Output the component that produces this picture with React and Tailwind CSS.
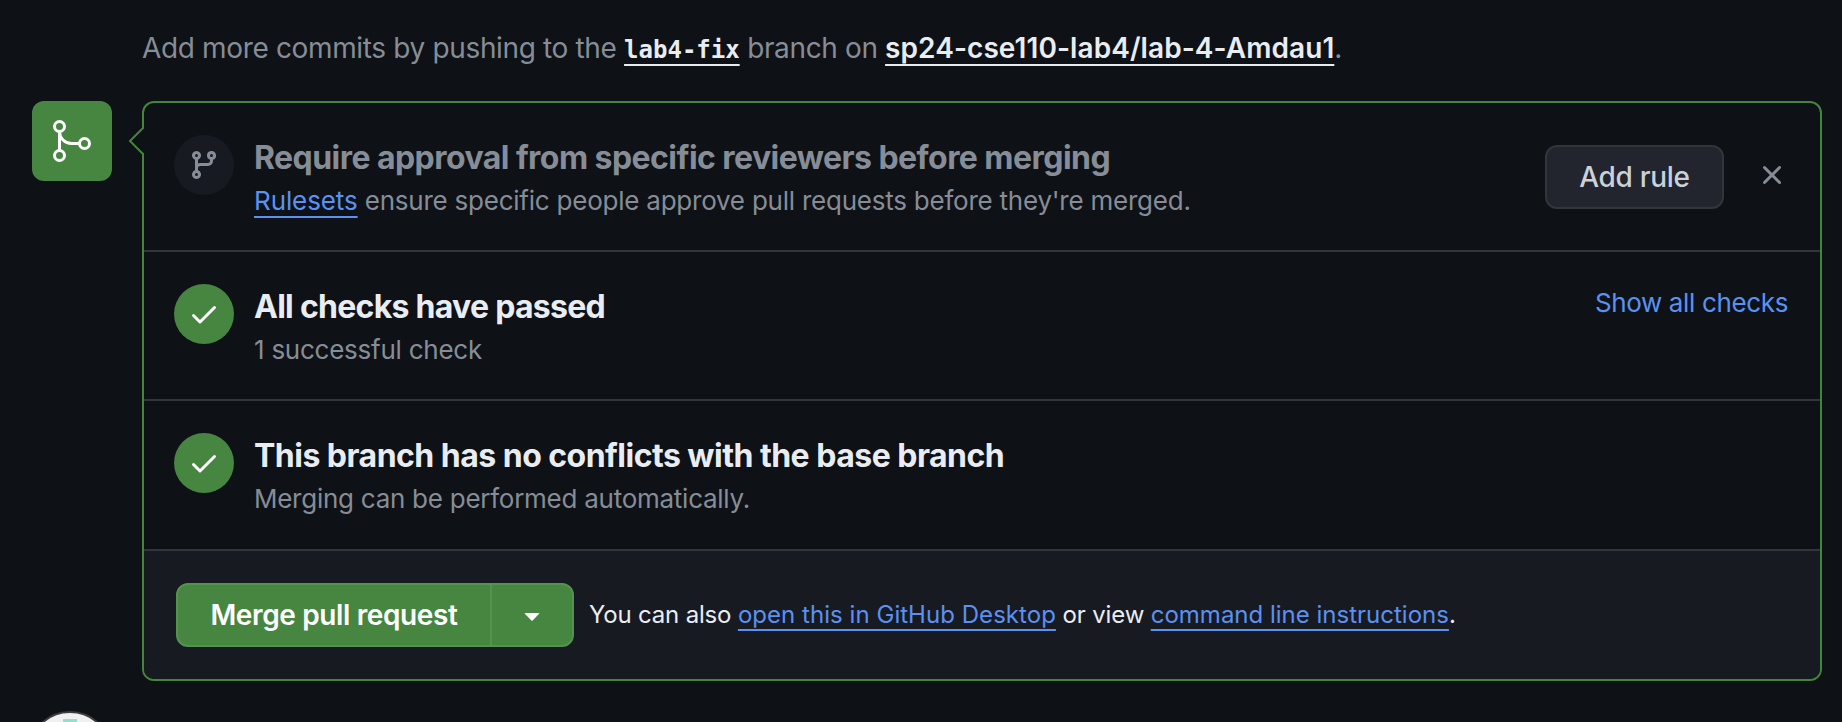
const GIT_BRANCH =
  "M9.5 3.25a2.25 2.25 0 1 1 3 2.122V6A2.5 2.5 0 0 1 10 8.5H6a1 1 0 0 0-1 1v1.128a2.251 2.251 0 1 1-1.5 0V5.372a2.25 2.25 0 1 1 1.5 0v1.836A2.493 2.493 0 0 1 6 7h4a1 1 0 0 0 1-1v-.628A2.25 2.25 0 0 1 9.5 3.25Zm-6 0a.75.75 0 1 0 1.5 0 .75.75 0 0 0-1.5 0Zm8.25-.75a.75.75 0 1 0 0 1.5.75.75 0 0 0 0-1.5ZM4.25 12a.75.75 0 1 0 0 1.5.75.75 0 0 0 0-1.5Z";
const CHECK =
  "M13.78 4.22a.75.75 0 0 1 0 1.06l-7.25 7.25a.75.75 0 0 1-1.06 0L2.22 9.28a.751.751 0 0 1 .018-1.042.751.751 0 0 1 1.042-.018L6 10.94l6.72-6.72a.75.75 0 0 1 1.06 0Z";
const CLOSE =
  "M3.72 3.72a.75.75 0 0 1 1.06 0L8 6.94l3.22-3.22a.749.749 0 0 1 1.275.326.749.749 0 0 1-.215.734L9.06 8l3.22 3.22a.749.749 0 0 1-.326 1.275.749.749 0 0 1-.734-.215L8 9.06l-3.22 3.22a.751.751 0 0 1-1.042-.018.751.751 0 0 1-.018-1.042L6.94 8 3.72 4.78a.75.75 0 0 1 0-1.06Z";
const CARET = "m4.427 7.427 3.396 3.396a.25.25 0 0 0 .354 0l3.396-3.396A.25.25 0 0 0 11.396 7H4.604a.25.25 0 0 0-.177.427Z";

function Octicon({ d, className = "" }) {
  return (
    <svg viewBox="0 0 16 16" className={`size-8 shrink-0 fill-current ${className}`} aria-hidden="true">
      <path d={d} />
    </svg>
  );
}

function MergeIcon() {
  return (
    <svg viewBox="0 0 24 24" className="size-12 fill-none stroke-white stroke-[1.5]" aria-hidden="true">
      <circle cx="5.75" cy="4.75" r="2.5" />
      <circle cx="5.75" cy="19.25" r="2.5" />
      <circle cx="18.25" cy="13.25" r="2.5" />
      <path d="M5.75 7.25v9.5M5.75 7.25a6 6 0 0 0 6 6h4" />
    </svg>
  );
}

function Link({ className = "", children }) {
  return (
    <a
      href="#"
      className={`underline decoration-2 underline-offset-[6px] [text-decoration-skip-ink:none] ${className}`}
    >
      {children}
    </a>
  );
}

function StatusRow({ icon, iconClass, title, titleClass, detail, className = "", children }) {
  return (
    <section className={`flex items-start border-b-2 border-[#32353a] pr-8 pl-[30px] ${className}`}>
      <div className={`mt-8 flex size-[60px] shrink-0 items-center justify-center rounded-full ${iconClass}`}>
        <Octicon d={icon} />
      </div>
      <div className="ml-5 flex-1 pt-[30px] whitespace-nowrap">
        <h3 className={`text-[32px] leading-[50px] [font-weight:650] ${titleClass}`}>{title}</h3>
        <p className="text-[26px] leading-[35px] text-[#868d96]">{detail}</p>
      </div>
      {children}
    </section>
  );
}

export default function App() {
  return (
    <main className="h-[722px] w-[1842px] overflow-hidden bg-[#0e1116] font-['Inter',sans-serif]">
      <p className="h-[69px] pt-[27px] pl-[142px] text-[28px] leading-[42px] whitespace-nowrap text-[#868d96]">
        <span className="tracking-[-0.35px]">Add more commits by pushing to the </span>
        <Link className="font-['DejaVu_Sans_Mono',monospace] text-[24px] leading-none font-bold text-[#e9edf2]">
          lab4-fix
        </Link>
        <span className="tracking-[-0.37px]"> branch on </span>
        <Link className="font-semibold tracking-[0.08px] text-[#e9edf2]">sp24-cse110-lab4/lab-4-Amdau1</Link>.
      </p>

      <div className="mt-8 flex items-start pl-8">
        <div className="flex size-20 shrink-0 items-center justify-center rounded-xl bg-[#468641]">
          <MergeIcon />
        </div>

        <div className="relative ml-[30px] h-[580px] w-[1680px] rounded-xl border-2 border-[#43853d]">
          <svg viewBox="0 0 17 30" className="absolute top-[23px] -left-4 h-[30px] w-[17px]" aria-hidden="true">
            <path d="M16 2 3 15l13 13h1V2z" className="fill-[#0e1116]" />
            <path d="M15.5 1.5 2 15l13.5 13.5" className="fill-none stroke-[#43853d] stroke-2" />
          </svg>

          <StatusRow
            className="h-[149px]"
            icon={GIT_BRANCH}
            iconClass="bg-[#171a21] text-[#868d96]"
            title="Require approval from specific reviewers before merging"
            titleClass="tracking-[-0.55px] text-[#868d96]"
            detail={
              <>
                <Link className="tracking-[-0.1px] text-[#5a91f2]">Rulesets</Link>
                <span className="tracking-[-0.23px]">
                  {" "}
                  ensure specific people approve pull requests before they're merged.
                </span>
              </>
            }
          >
            <button className="mt-[42px] h-16 w-[179px] rounded-xl border-2 border-[#32353a] bg-[#22252d] text-[28px] font-medium tracking-[-0.3px] text-[#c9d1d9]">
              Add rule
            </button>
            <button className="mt-14 ml-8 text-[#868d96]" aria-label="Dismiss">
              <Octicon d={CLOSE} />
            </button>
          </StatusRow>

          <StatusRow
            className="h-[149px]"
            icon={CHECK}
            iconClass="bg-[#468641] text-white"
            title="All checks have passed"
            titleClass="tracking-[-0.72px] text-[#e9edf2]"
            detail={<span className="tracking-[-0.25px]">1 successful check</span>}
          >
            <a href="#" className="mt-[31px] text-[26px] leading-[39px] tracking-[-0.36px] text-[#5a91f2]">
              Show all checks
            </a>
          </StatusRow>

          <StatusRow
            className="h-[150px]"
            icon={CHECK}
            iconClass="bg-[#468641] text-white"
            title="This branch has no conflicts with the base branch"
            titleClass="tracking-[-0.52px] text-[#e9edf2]"
            detail={<span className="tracking-[-0.26px]">Merging can be performed automatically.</span>}
          />

          <footer className="flex h-32 items-center rounded-b-[10px] bg-[#181a22] pl-8">
            <div className="flex h-16 w-[398px] overflow-hidden rounded-xl border-2 border-[#549250] bg-[#468641] text-white">
              <button className="w-[312px] text-[28px] font-semibold tracking-[-0.37px]">Merge pull request</button>
              <button
                className="flex flex-1 items-center justify-center border-l-2 border-[#549250]"
                aria-label="Select merge method"
              >
                <Octicon d={CARET} />
              </button>
            </div>
            <p className="ml-[15px] text-[24px] leading-9 whitespace-nowrap text-[#e9edf2]">
              <span className="tracking-[-0.18px]">You can also </span>
              <Link className="tracking-[0.04px] text-[#5a91f2]">open this in GitHub Desktop</Link>
              <span className="tracking-[-0.15px]"> or view </span>
              <Link className="text-[#5a91f2]">command line instructions</Link>.
            </p>
          </footer>
        </div>
      </div>

      <div className="mt-[30px] ml-7 flex size-[84px] justify-center overflow-hidden rounded-full border-2 border-[#3c3d42] bg-[#f0f0f0] pt-[6px]">
        <div className="h-3.5 w-3.5 bg-[#94dfc9]" />
      </div>
    </main>
  );
}
